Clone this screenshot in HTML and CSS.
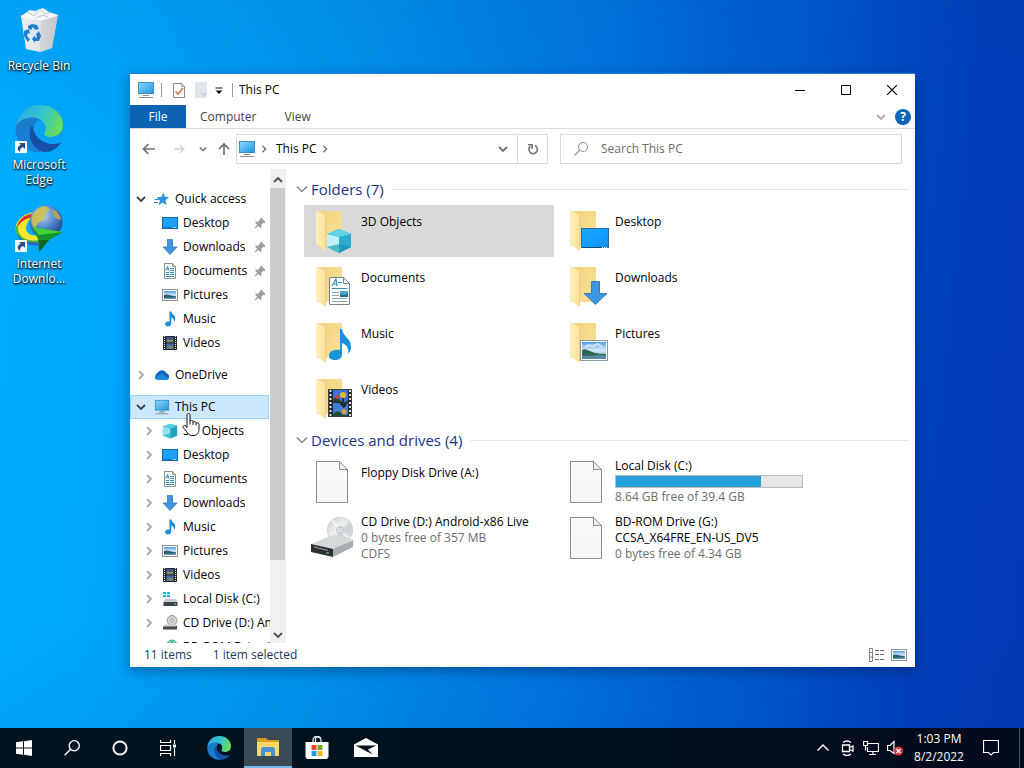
FILE: index.html
```html
<!DOCTYPE html>
<html lang="en">
<head>
<meta charset="utf-8">
<meta name="viewport" content="width=device-width, initial-scale=1">
<title>This PC</title>
<link rel="stylesheet" href="styles.css">
</head>
<body>
<svg class="sprite" aria-hidden="true">
  <defs>
    <linearGradient id="g-screen" x1="0" y1="0" x2="1" y2="1"><stop offset="0" stop-color="#8ad8f8"/><stop offset="1" stop-color="#2196e3"/></linearGradient>
    <linearGradient id="g-back" x1="0" y1="0" x2="1" y2="1"><stop offset="0" stop-color="#f0d07c"/><stop offset="1" stop-color="#fce39c"/></linearGradient>
    <linearGradient id="g-flap" x1="0" y1="0" x2="1" y2="0"><stop offset="0" stop-color="#fef0bd"/><stop offset="1" stop-color="#fde198"/></linearGradient>
    <linearGradient id="g-desk" x1="0" y1="0" x2="1" y2="1"><stop offset="0" stop-color="#22a4fb"/><stop offset=".5" stop-color="#12a0ff"/><stop offset="1" stop-color="#1b8cf0"/></linearGradient>
    <linearGradient id="g-sky" x1="0" y1="0" x2="0" y2="1"><stop offset="0" stop-color="#4f9fe8"/><stop offset=".5" stop-color="#d5ebfa"/><stop offset="1" stop-color="#5d93b0"/></linearGradient>
    <linearGradient id="g-bin" x1="0" y1="0" x2="1" y2="0"><stop offset="0" stop-color="#eceff1"/><stop offset=".6" stop-color="#dfe2e4"/><stop offset="1" stop-color="#b9bdc0"/></linearGradient>
    <linearGradient id="g-edge-top" x1="0" y1=".3" x2="1" y2=".6"><stop offset="0" stop-color="#2aa9df"/><stop offset=".5" stop-color="#33c5d0"/><stop offset="1" stop-color="#6be04f"/></linearGradient>
    <linearGradient id="g-edge-left" x1="0" y1="0" x2=".5" y2="1"><stop offset="0" stop-color="#1b77c0"/><stop offset="1" stop-color="#1683df"/></linearGradient>
    <linearGradient id="g-cd" x1="0" y1="0" x2="1" y2="1"><stop offset="0" stop-color="#c6cbcd"/><stop offset=".45" stop-color="#eef1f2"/><stop offset=".6" stop-color="#ccd2d4"/><stop offset="1" stop-color="#dde1e2"/></linearGradient>
    <radialGradient id="g-globe" cx=".4" cy=".3" r=".8"><stop offset="0" stop-color="#b8d7f2"/><stop offset=".5" stop-color="#4c82cb"/><stop offset="1" stop-color="#173a7c"/></radialGradient>
    <linearGradient id="g-page" x1="0" y1="0" x2="0" y2="1"><stop offset="0" stop-color="#f9fafa"/><stop offset="1" stop-color="#f5f7f7"/></linearGradient>
  </defs>

  <symbol id="i-pc" viewBox="0 0 18 18">
    <rect x="1.5" y="1.5" width="15" height="11" fill="url(#g-screen)" stroke="#3d8fc6"/>
    <path d="M6 14.5h6M2 16.5h14" stroke="#8a9299" stroke-width="1.2"/>
  </symbol>
  <symbol id="i-desktop" viewBox="0 0 16 16">
    <rect x=".5" y="2.5" width="15" height="11" fill="#1ba1f8" stroke="#1469ad"/>
    <path d="M1 12.5h10" stroke="#1778c4"/><path d="M11 12.5h4" stroke="#d8efff" stroke-dasharray="1 1"/>
  </symbol>
  <symbol id="i-downloads" viewBox="0 0 16 16">
    <path d="M5.500 .5h5v7.500h4.500L8 15.500 1 8h4.500z" fill="#3f96de" stroke="#2f78b8" stroke-width=".8"/>
  </symbol>
  <symbol id="i-documents" viewBox="0 0 16 16">
    <path d="M2.500.5h8l3 3v12h-11z" fill="#fff" stroke="#8a8f94"/><path d="M10.500.5v3h3" fill="none" stroke="#8a8f94"/>
    <path d="M4 7.500 5.500 3.500 7 7.500M4.500 6h2M8 5.500h4M8 7.500h4M4 9.500h3M8 9.500h4M4 11.500h3M8 11.500h4M4 13.500h8" stroke="#3388bb" fill="none"/>
  </symbol>
  <symbol id="i-pictures" viewBox="0 0 16 16">
    <rect x=".5" y="2.5" width="15" height="11" fill="#fff" stroke="#8b9299"/>
    <rect x="2" y="4" width="12" height="8" fill="url(#g-sky)"/><path d="M2 8c3-1.500 5 0 12 1.500V12H2z" fill="#2c6173"/><path d="M2 11l12-.5V12H2z" fill="#6f9fc0"/>
  </symbol>
  <symbol id="i-music" viewBox="0 0 16 16">
    <path d="M7.500.5h1.800c.3 3 4 3.500 4 7 0 1.500-.6 2.600-1.300 3.500.3-2.500-.8-3.700-2.700-4.500v6c0 1.800-1.600 3-3.400 3-1.600 0-2.900-.9-2.900-2.400 0-1.900 2.300-3.100 4.500-2.500z" fill="#1b90dc"/>
  </symbol>
  <symbol id="i-videos" viewBox="0 0 16 16">
    <rect x="1" y="1" width="14" height="14" fill="#2a2c2e"/>
    <path d="M2.500 1v14M13.500 1v14" stroke="#e6e6e6" stroke-dasharray="1 1"/>
    <rect x="4.5" y="2" width="7" height="5.5" fill="#3b56a0"/><rect x="4.5" y="8.5" width="7" height="5.5" fill="#4668b8"/>
    <path d="M5 5c2-2 3 2 6-1v3H5zM5 12c2-2 3 1 6-2v3H5z" fill="#8b923c"/>
  </symbol>
  <symbol id="i-star" viewBox="0 0 16 16">
    <path d="M9.500 1.500 10.800 5.800l4.200.4-3.500 3 1.200 5-4-2.800-4.200 2.800 1.500-4.700L2.500 6.300l4.800-.3z" fill="#2a92df"/><path d="M1 8.500h4M0 11.500h4" stroke="#2a92df"/>
  </symbol>
  <symbol id="i-onedrive" viewBox="0 0 18 16">
    <path d="M4.500 13.500A4.300 4.300 0 0 1 4 5.500 5.600 5.600 0 0 1 14 6a3.900 3.900 0 0 1 .5 7.500z" fill="#0f65b8"/><path d="M4 13.500c-1.500 0-3-1-3.300-3L9 6.500l7.500 4.800c-.5 1.600-1.700 2.200-3.200 2.200z" fill="#1b8ade"/>
  </symbol>
  <symbol id="i-cube" viewBox="0 0 18 18">
    <path d="M1 4 9 .8 17 3v11l-7.500 3.500L1 14z" fill="#38bcd4"/><path d="M1 4l8.500 2.200V17.500L1 14z" fill="#8fe3ee"/><path d="M9.500 6.200 17 3v11l-7.500 3.500z" fill="#21a3c0"/><path d="M1 4 9 .8 17 3 9.500 6.200z" fill="#57cfe0"/><path d="M1 14l8.500-2.500v6z" fill="#43bfd2"/>
  </symbol>
  <symbol id="i-disk" viewBox="0 0 16 16">
    <path d="M1 1h3v2H1zM5 1h3v2H5zM1 4h3v2H1zM5 4h3v2H5z" fill="#19b3e6"/><path d="M3 8h11l1.500 3H1.500z" fill="#c8cccf"/><path d="M1.500 11h14v4h-14z" fill="#3b4247"/><path d="M12 13h2" stroke="#62e076"/>
  </symbol>
  <symbol id="i-cd" viewBox="0 0 16 16">
    <circle cx="10" cy="5.5" r="5" fill="#d2d6d8" stroke="#93999c"/><circle cx="10" cy="5.5" r="1.500" fill="#fff" stroke="#93999c"/><path d="M2.500 9.500h9l4 1.500-2 1H1z" fill="#cdd1d3"/><path d="M1 11.500h12l2-1v4H1z" fill="#454b4f"/>
  </symbol>
  <symbol id="i-bd" viewBox="0 0 16 16">
    <circle cx="10" cy="6" r="5" fill="#7fd9a8" stroke="#4ab988"/><path d="M7 8l4-7" stroke="#2b9d68"/>
  </symbol>
  <symbol id="i-pin" viewBox="0 0 12 12">
    <path d="M7 .5 11.500 5l-1 1-1-.3-2.300 2.300.2 2-1 1L4.300 8.900 1 11.500.5 11l2.600-3.300L1 5.600l1-1 2 .2L6.300 2.500 6 1.500z" fill="#9a9ea2"/>
  </symbol>
  <symbol id="i-down" viewBox="0 0 10 10"><path d="M1 3l4 4 4-4" fill="none" stroke="currentColor" stroke-width="1.800"/></symbol>
  <symbol id="i-down-thin" viewBox="0 0 12 10"><path d="M1 2.500l5 5 5-5" fill="none" stroke="currentColor" stroke-width="1.100"/></symbol>
  <symbol id="i-up" viewBox="0 0 10 10"><path d="M1 7l4-4 4 4" fill="none" stroke="currentColor" stroke-width="1.800"/></symbol>
  <symbol id="i-right" viewBox="0 0 10 10"><path d="M3 1l4 4-4 4" fill="none" stroke="currentColor" stroke-width="1.700"/></symbol>
  <symbol id="i-search" viewBox="0 0 16 16"><circle cx="10" cy="6" r="4.500" fill="none" stroke="currentColor" stroke-width="1.200"/><path d="M6.800 9.200 1.500 14.500" stroke="currentColor" stroke-width="1.300"/></symbol>

  <symbol id="folder" viewBox="0 0 48 48">
    <path d="M9 6h25v35H9z" fill="url(#g-back)"/>
    <path d="M9 6h1l8 5v33c0 2-1 2-2 1l-8-7V7c0-1 0-1 1-1z" fill="url(#g-flap)"/>
    <path d="M17.500 12v32" stroke="#f0d080" fill="none"/>
  </symbol>
  <symbol id="f-cube" viewBox="0 0 48 48">
    <use href="#folder"/><path d="M19 29 31 24l12 5v13l-12 6-12-6z" fill="#1fa8cb"/><path d="M19 29l12 3v16l-12-6z" fill="#bff0f7"/><path d="M31 32l12-3v13l-12 6z" fill="#2dacd0"/><path d="M19 29 31 24l12 5-12 3z" fill="#5fd4e8"/><path d="M19 42l12-3 12 3-12 6z" fill="#0d8fa9" opacity=".6"/>
  </symbol>
  <symbol id="f-desktop" viewBox="0 0 48 48">
    <use href="#folder"/><rect x="19.5" y="23.5" width="27" height="19" fill="url(#g-desk)" stroke="#1d6da9"/><path d="M20 42.500h20" stroke="#154f80"/><path d="M40 42.500h6" stroke="#e9f6ff" stroke-dasharray="1 1"/>
  </symbol>
  <symbol id="f-documents" viewBox="0 0 48 48">
    <use href="#folder"/><path d="M21.500 16.500h14l6 6v21h-20z" fill="#fdfeff" stroke="#77838b"/><path d="M35.500 16.500v6h6z" fill="#eef1f3" stroke="#77838b"/>
    <path d="M24 25l4-7 1 7M25 23h4M30 21.500h4M23.500 27.500h16" fill="none" stroke="#3a8fbb" stroke-width="1.200"/><path d="M24 31.500h7M24 34.500h7M24 37.500h15M24 40.500h15" stroke="#8ea4b1"/><path d="M32 30h8v6h-8z" fill="#4ba3d4"/><path d="M32 33l3 1 5-1v3h-8z" fill="#2c6b80"/>
  </symbol>
  <symbol id="f-downloads" viewBox="0 0 48 48">
    <use href="#folder"/><path d="M29.500 20.500h8v12H45L33.500 43.500 22 32.500h7.500z" fill="#3b97e4" stroke="#397bad"/>
  </symbol>
  <symbol id="f-music" viewBox="0 0 48 48">
    <use href="#folder"/><path d="M32 12h2c1 8 9 9 9 18 0 3-1.500 5-3 7 1-6-1-9-6-11v11c0 4-3 6-7 6-3.500 0-6-1.500-6-4.500 0-4 5-6.500 11-5.500z" fill="#1793dc"/>
  </symbol>
  <symbol id="f-pictures" viewBox="0 0 48 48">
    <use href="#folder"/><rect x="18.5" y="23.5" width="27" height="20" fill="#fff" stroke="#8599a5"/><rect x="20" y="25" width="24" height="17" fill="url(#g-sky)"/><path d="M23 30l4-2 4 1 5-2 4 3" stroke="#fff" stroke-width="2" opacity=".6" fill="none"/><path d="M20 33c3-2 5 0 8 1s5 3 16 3v1c-8 1-16 1-24 1z" fill="#2b6650"/><path d="M20 39c7 0 16-1 24-1v4H20z" fill="#5689a3"/>
  </symbol>
  <symbol id="f-videos" viewBox="0 0 48 48">
    <use href="#folder"/><rect x="20.5" y="16.5" width="23" height="27" fill="#25282b" stroke="#3b3f42"/><path d="M22.500 17v27M42 17v27" stroke="#eee" stroke-width="1.800" stroke-dasharray="2 2"/>
    <rect x="25" y="17" width="15" height="12" fill="#3b73d4"/><rect x="25" y="30" width="15" height="13" fill="#4180da"/>
    <path d="M25 26q4-4 7 1t8 0v2H25zM25 41q5-5 8-1t7 1v2H25z" fill="#27472f"/><circle cx="35" cy="22" r="3" fill="#e8b92c"/><circle cx="29" cy="24" r="2" fill="#c84a35"/><circle cx="36" cy="38.5" r="2.500" fill="#e29e27"/><path d="M35 25v4M33 31h5l-2 3z" stroke="#201d18" stroke-width="1.500" fill="#d7432b"/>
  </symbol>
  <symbol id="f-page" viewBox="0 0 48 48">
    <path d="M8.500 5.500h23l8 8v33h-31z" fill="url(#g-page)" stroke="#8b8e90"/><path d="M31.500 5.500v8h8z" fill="#eceeee" stroke="#8b8e90"/>
  </symbol>
  <symbol id="f-cd" viewBox="0 0 48 48">
    <circle cx="32" cy="18" r="12.700" fill="url(#g-cd)" stroke="#bfc5c8" stroke-width=".7"/><path d="M32 18 24 8M32 18l10 9" stroke="#f8fafa" stroke-width="3" opacity=".6"/><circle cx="32" cy="18" r="3.300" fill="#eef1f2" stroke="#aeb4b7"/><circle cx="32" cy="18" r="1.200" fill="#fff" stroke="#9ba1a4" stroke-width=".6"/>
    <path d="M3 32 25 23l20 4-20 11z" fill="#d5d9da"/><path d="M3 32l22 5v8L3 40z" fill="#2d3133"/><path d="M25 37l20-9v7L25 45z" fill="#a9aeb0"/><path d="M6 35l14 3.500" stroke="#a0a6a9"/><path d="M18 41h3" stroke="#6ee07e"/>
  </symbol>

  <symbol id="i-edge" viewBox="0 0 48 48">
    <circle cx="24" cy="24" r="23.500" fill="url(#g-edge-left)"/>
    <path d="M1 21C3 8 13 0 25 0c13 0 23 9 23 20 0 8-6 12-12 12-5 0-8-2-7-4 2-2 2-8-1-11C22 10 7 11 1 21z" fill="url(#g-edge-top)"/>
    <path d="M17 20c-6 11 0 24 12 27 8 1 14-5 17-9 1-1 0-2-1-1-10 4-25 0-28-17z" fill="#174fa7"/>
    <path class="edge-gap" d="M29 28c-1 2 2 4 7 4s12-3 12-9v13c-1 2-6 3-10 3-10 0-20-8-19-17 1-6 6-8 9-5 3 3 3 9 1 11z"/>
  </symbol>
  <symbol id="i-shortcut" viewBox="0 0 12 12"><path d="M0 0h12v12H0z" fill="#f6f8fa"/><path d="M4 2h6v6L8 6c-3 1-3 3-3 5C1 8 3 4.500 6 4z" fill="#274b85"/></symbol>
  <symbol id="i-recycle" viewBox="0 0 48 48">
    <path d="M6 10 15 4l5 1 8-3 6 4 9 3-3 7H8z" fill="#f4f6f7"/><path d="M12 6l7 4 5-7 6 5 6-2M9 10l8 4 11-5 9 4" fill="none" stroke="#c2c8cd"/>
    <path d="M6 10l20 4 17-5-6 33-12 4-14-3z" fill="url(#g-bin)"/><path d="M26 14 43 9l-6 33-12 4z" fill="#c9cdd0" opacity=".65"/><path d="M6 10l20 4 17-5" fill="none" stroke="#fff"/>
    <g fill="#1d7dd0"><path d="M13 20l4-2 5 1 2 4-4 1-2-3-2 3-3-2z"/><path d="M9 25l5-2 1 5-2-1-1 3 3 3-2 3-4-6z"/><path d="M24 25l2 5-2 5h-4v2l-3-4 3-4v3l2-1-1-3z"/></g>
  </symbol>
  <symbol id="i-idm" viewBox="0 0 48 48">
    <path d="M22 8C8 8-1 18 1 27c2 9 16 12 26 10l-2-6C13 33 9 27 12 20c2-5 7-8 12-9z" fill="#f5e731"/>
    <path d="M20 9C8 10 2 18 2 24c3-6 8-10 20-12z" fill="#dc2f28"/><path d="M3 22c-1 13 12 16 23 14l1 3C12 41-1 35 1 22z" fill="#44b63c"/><path d="M2 30c5 9 17 9 26 8l-1 3C14 43 4 38 2 30z" fill="#345bc6"/>
    <circle cx="31" cy="18" r="16.500" fill="url(#g-globe)"/><path d="M17 12c3-7 9-10 14-10l4 4-4 3-2 7-6 3-3 6c-4-4-4-9-3-13z" fill="#cfc052" opacity=".9"/><path d="M37 5c5 2 8 6 9 11l-6-2-2-4z" fill="#a9a757"/>
    <path d="M17 23l31 5-14 8-10 12-1-13z" fill="#16942a"/><path d="M17 23l31 5-24 3z" fill="#42cf3d"/><path d="M24 36l10 0-10 12z" fill="#0b6820"/>
  </symbol>
</svg>

<div class="screen">
  <main class="desktop">
    <nav class="shortcuts" aria-label="Desktop">
      <a class="shortcut" href="#"><span class="shortcut-art"><svg class="i48"><use href="#i-recycle"/></svg></span><span>Recycle Bin</span></a>
      <a class="shortcut" href="#"><span class="shortcut-art"><svg class="i48 edge-desk"><use href="#i-edge"/></svg><svg class="badge"><use href="#i-shortcut"/></svg></span><span>Microsoft<br>Edge</span></a>
      <a class="shortcut" href="#"><span class="shortcut-art"><svg class="i48"><use href="#i-idm"/></svg><svg class="badge"><use href="#i-shortcut"/></svg></span><span>Internet<br>Downlo...</span></a>
    </nav>

    <section class="window" aria-label="This PC">
      <header class="titlebar">
        <svg class="i18"><use href="#i-pc"/></svg>
        <span class="tick"></span>
        <button class="quick" aria-label="Properties"><svg class="i16" viewBox="0 0 16 16"><path d="M2.500 1.500h8l3 3v11h-11z" fill="#fdfdfd" stroke="#8b8b8b"/><path d="M10.500 1.500v3h3" fill="none" stroke="#aaa"/><path d="M4.500 9.500 7 12l5-6" fill="none" stroke="#c67b4c" stroke-width="1.600"/></svg></button>
        <button class="quick" aria-label="New folder"><svg class="i16" viewBox="0 0 16 16"><path d="M2 0h12v11l-1 5H2z" fill="#dfe5ea"/><path d="M10 16v-5h4z" fill="#c8d0d6"/></svg></button>
        <button class="quick narrow" aria-label="Customize Quick Access Toolbar"><svg class="i10" viewBox="0 0 10 10"><path d="M1.500 3h7" stroke="#111"/><path d="M1.500 5.500h7L5 9z" fill="#111"/></svg></button>
        <span class="tick"></span>
        <h1 class="title">This PC</h1>
        <div class="controls">
          <button aria-label="Minimize"><svg class="i10" viewBox="0 0 10 10"><path d="M0 5.500h10" stroke="#000"/></svg></button>
          <button aria-label="Maximize"><svg class="i10" viewBox="0 0 10 10"><path d="M.5.5h9v9h-9z" fill="none" stroke="#000"/></svg></button>
          <button aria-label="Close"><svg class="i10" viewBox="0 0 10 10"><path d="M0 0l10 10M10 0 0 10" stroke="#000" stroke-width="1.100"/></svg></button>
        </div>
      </header>

      <div class="ribbon">
        <button class="tab file">File</button>
        <button class="tab">Computer</button>
        <button class="tab">View</button>
        <button class="expand" aria-label="Expand the Ribbon"><svg class="i10"><use href="#i-down"/></svg></button>
        <button class="help" aria-label="Help">?</button>
      </div>

      <div class="navbar">
        <button class="nav" aria-label="Back"><svg class="i14" viewBox="0 0 14 14"><path d="M13 7H1.500M6.500 2l-5 5 5 5" fill="none" stroke="#707070" stroke-width="1.700"/></svg></button>
        <button class="nav" aria-label="Forward"><svg class="i14" viewBox="0 0 14 14"><path d="M2 7h10M8 3l4 4-4 4" fill="none" stroke="#d2d2d2" stroke-width="1.400"/></svg></button>
        <button class="nav recent" aria-label="Recent locations"><svg class="i8"><use href="#i-down"/></svg></button>
        <button class="nav upward" aria-label="Up"><svg class="i14" viewBox="0 0 14 14"><path d="M7 13V2M2 7l5-5 5 5" fill="none" stroke="#707070" stroke-width="1.700"/></svg></button>
        <div class="address">
          <svg class="i18"><use href="#i-pc"/></svg>
          <svg class="i8 crumb"><use href="#i-right"/></svg>
          <a class="here" href="#">This PC</a>
          <svg class="i8 crumb"><use href="#i-right"/></svg>
          <button class="history" aria-label="Previous locations"><svg class="i10"><use href="#i-down"/></svg></button>
          <button class="refresh" aria-label="Refresh"><svg class="i14" viewBox="0 0 14 14"><path d="M9 3.600A4.200 4.200 0 1 1 4.400 4.200" fill="none" stroke="#777" stroke-width="1.700"/><path d="M2 2.800h4.200V7" fill="none" stroke="#777" stroke-width="1.600"/></svg></button>
        </div>
        <div class="search"><svg class="i16"><use href="#i-search"/></svg><input type="search" placeholder="Search This PC" aria-label="Search This PC"></div>
      </div>

      <div class="body">
        <nav class="tree" aria-label="Folders">
          <ul>
            <li class="root open"><button aria-label="Collapse"><svg class="i10"><use href="#i-down"/></svg></button><a href="#"><svg class="i16"><use href="#i-star"/></svg>Quick access</a></li>
            <li class="leaf"><a href="#"><svg class="i16"><use href="#i-desktop"/></svg>Desktop</a><svg class="pin"><use href="#i-pin"/></svg></li>
            <li class="leaf"><a href="#"><svg class="i16"><use href="#i-downloads"/></svg>Downloads</a><svg class="pin"><use href="#i-pin"/></svg></li>
            <li class="leaf"><a href="#"><svg class="i16"><use href="#i-documents"/></svg>Documents</a><svg class="pin"><use href="#i-pin"/></svg></li>
            <li class="leaf"><a href="#"><svg class="i16"><use href="#i-pictures"/></svg>Pictures</a><svg class="pin"><use href="#i-pin"/></svg></li>
            <li class="leaf"><a href="#"><svg class="i16"><use href="#i-music"/></svg>Music</a></li>
            <li class="leaf"><a href="#"><svg class="i16"><use href="#i-videos"/></svg>Videos</a></li>
          </ul>
          <ul>
            <li class="root"><button aria-label="Expand"><svg class="i10"><use href="#i-right"/></svg></button><a href="#"><svg class="i16"><use href="#i-onedrive"/></svg>OneDrive</a></li>
          </ul>
          <ul>
            <li class="root open selected"><button aria-label="Collapse"><svg class="i10"><use href="#i-down"/></svg></button><a href="#"><svg class="i16"><use href="#i-pc"/></svg>This PC</a></li>
            <li><button aria-label="Expand"><svg class="i10"><use href="#i-right"/></svg></button><a href="#"><svg class="i16"><use href="#i-cube"/></svg>3D Objects</a></li>
            <li><button aria-label="Expand"><svg class="i10"><use href="#i-right"/></svg></button><a href="#"><svg class="i16"><use href="#i-desktop"/></svg>Desktop</a></li>
            <li><button aria-label="Expand"><svg class="i10"><use href="#i-right"/></svg></button><a href="#"><svg class="i16"><use href="#i-documents"/></svg>Documents</a></li>
            <li><button aria-label="Expand"><svg class="i10"><use href="#i-right"/></svg></button><a href="#"><svg class="i16"><use href="#i-downloads"/></svg>Downloads</a></li>
            <li><button aria-label="Expand"><svg class="i10"><use href="#i-right"/></svg></button><a href="#"><svg class="i16"><use href="#i-music"/></svg>Music</a></li>
            <li><button aria-label="Expand"><svg class="i10"><use href="#i-right"/></svg></button><a href="#"><svg class="i16"><use href="#i-pictures"/></svg>Pictures</a></li>
            <li><button aria-label="Expand"><svg class="i10"><use href="#i-right"/></svg></button><a href="#"><svg class="i16"><use href="#i-videos"/></svg>Videos</a></li>
            <li><button aria-label="Expand"><svg class="i10"><use href="#i-right"/></svg></button><a href="#"><svg class="i16"><use href="#i-disk"/></svg>Local Disk (C:)</a></li>
            <li><button aria-label="Expand"><svg class="i10"><use href="#i-right"/></svg></button><a href="#"><svg class="i16"><use href="#i-cd"/></svg>CD Drive (D:) An</a></li>
            <li><button aria-label="Expand"><svg class="i10"><use href="#i-right"/></svg></button><a href="#"><svg class="i16"><use href="#i-bd"/></svg>BD-ROM Drive (</a></li>
          </ul>
        </nav>
        <div class="scrollbar">
          <button aria-label="Scroll up"><svg class="i10"><use href="#i-up"/></svg></button>
          <div class="track"><div class="thumb"></div></div>
          <button aria-label="Scroll down"><svg class="i10"><use href="#i-down"/></svg></button>
        </div>

        <div class="content">
          <section class="group">
            <h2><svg class="chev"><use href="#i-down-thin"/></svg>Folders (7)</h2>
            <div class="tiles">
              <a class="tile active" href="#"><svg class="i48"><use href="#f-cube"/></svg><span class="text">3D Objects</span></a>
              <a class="tile" href="#"><svg class="i48"><use href="#f-desktop"/></svg><span class="text">Desktop</span></a>
              <a class="tile" href="#"><svg class="i48"><use href="#f-documents"/></svg><span class="text">Documents</span></a>
              <a class="tile" href="#"><svg class="i48"><use href="#f-downloads"/></svg><span class="text">Downloads</span></a>
              <a class="tile" href="#"><svg class="i48"><use href="#f-music"/></svg><span class="text">Music</span></a>
              <a class="tile" href="#"><svg class="i48"><use href="#f-pictures"/></svg><span class="text">Pictures</span></a>
              <a class="tile" href="#"><svg class="i48"><use href="#f-videos"/></svg><span class="text">Videos</span></a>
            </div>
          </section>
          <section class="group">
            <h2><svg class="chev"><use href="#i-down-thin"/></svg>Devices and drives (4)</h2>
            <div class="tiles">
              <a class="tile" href="#"><svg class="i48"><use href="#f-page"/></svg><span class="text">Floppy Disk Drive (A:)</span></a>
              <a class="tile" href="#"><svg class="i48"><use href="#f-page"/></svg><span class="text full"><span>Local Disk (C:)</span><progress value="78" max="100" aria-label="Used space"></progress><small>8.64 GB free of 39.4 GB</small></span></a>
              <a class="tile" href="#"><svg class="i48"><use href="#f-cd"/></svg><span class="text full"><span>CD Drive (D:) Android-x86 Live</span><small>0 bytes free of 357 MB</small><small>CDFS</small></span></a>
              <a class="tile" href="#"><svg class="i48"><use href="#f-page"/></svg><span class="text full"><span>BD-ROM Drive (G:)</span><span>CCSA_X64FRE_EN-US_DV5</span><small>0 bytes free of 4.34 GB</small></span></a>
            </div>
          </section>
        </div>
      </div>

      <footer class="status">
        <span>11 items</span><span>1 item selected</span>
        <button class="view-first" aria-label="Details view"><svg class="i16" viewBox="0 0 16 16"><path d="M.5 1.500h3v13h-3zM.5 5.500h3M.5 10h3" fill="none" stroke="#858585"/><path d="M6 3.500h10M6 7.500h10M6 12.500h10" stroke="#666" stroke-dasharray="4 1"/></svg></button>
        <button aria-label="Large icons view"><svg class="i16"><use href="#i-pictures"/></svg></button>
      </footer>
    </section>

    <svg class="pointer" viewBox="0 0 18 24" aria-hidden="true"><path d="M5 2.500c0-2 3-2 3 0V9c0-1.500 3-1.500 3 0v1c0-1.500 3-1 3 .5v.500c.5-1 3-1 3 1V17c0 3-2 6-5 6H9.500C6.500 23 5 19 1.500 15.500 0 13.500 2.500 12 4 13.500L5 15z" fill="#fff" stroke="#111"/><path d="M8 9v3M11 10v2.500M14 11v2" stroke="#111"/></svg>
  </main>

  <footer class="taskbar">
    <button aria-label="Start"><svg class="i16" viewBox="0 0 16 16"><path d="M0 2.300 7 1.300V7.500H0zM8 1.200 16 0v7.500H8zM0 8.500h7v6.200l-7-1zM8 8.500h8V16l-8-1.200z" fill="#fff"/></svg></button>
    <button aria-label="Search"><svg class="i18"><use href="#i-search"/></svg></button>
    <button aria-label="Cortana"><svg class="i16" viewBox="0 0 16 16"><circle cx="8" cy="8" r="6.600" fill="none" stroke="#f4f7f8" stroke-width="2"/></svg></button>
    <button aria-label="Task view"><svg class="i16" viewBox="0 0 16 16"><path d="M.5 0v2.500h10V0M.5 5.500h10v5H.5zM.5 16v-2.500h10V16M14.500 0v4M14.500 8v8" fill="none" stroke="#fff" stroke-width="1.200"/><path d="M13 4.500h3v3h-3z" fill="#fff"/></svg></button>
    <div class="apps">
      <button aria-label="Microsoft Edge"><svg class="i24 edge-bar"><use href="#i-edge"/></svg></button>
      <button class="running" aria-label="File Explorer"><svg class="i24" viewBox="0 0 24 24"><path d="M1 3h9l2 2h11v16H1z" fill="#d99c22"/><path d="M1 7h22v14H1z" fill="#ffd968"/><path d="M5 21v-7l1.500-2h11l1.500 2v7h-4v-4H9v4z" fill="#4b91d1"/></svg></button>
      <button aria-label="Microsoft Store"><svg class="i24" viewBox="0 0 24 24"><path d="M8 7V4c0-5 8-5 8 0v3M10.500 6V3c0-3 5-2 5 0" fill="none" stroke="#dfe6ea" stroke-width="1.300"/><path d="M.5 6h23v15l-1.500 2H2L.500 21z" fill="#fff"/><path d="M6.500 9h5v5h-5z" fill="#e4492d"/><path d="M12.500 9h5v5h-5z" fill="#6fad21"/><path d="M6.500 15h5v5h-5z" fill="#2797db"/><path d="M12.500 15h5v5h-5z" fill="#f3b61b"/></svg></button>
      <button aria-label="Mail"><svg class="i24" viewBox="0 0 24 24"><path d="M0 8.500 12 2l12 6.500V21H0z" fill="#fff"/><path d="M1.500 9.500h21L14 13.500l4.500 5z" fill="#07131e"/></svg></button>
    </div>
    <div class="tray">
      <button aria-label="Show hidden icons"><svg class="i14" viewBox="0 0 14 14"><path d="M1.500 9.500 7 4l5.500 5.500" fill="none" stroke="#fff" stroke-width="1.400"/></svg></button>
      <button aria-label="Meet Now"><svg class="i16" viewBox="0 0 16 16"><path d="M3.500 5h7v6.500h-7zM10.500 7.500 14 6v5l-3.500-1.500M4 2.500Q8-.5 12 2.500M4 14q4 3 8 0" fill="none" stroke="#fff" stroke-width="1.300"/></svg></button>
      <button aria-label="Network"><svg class="i16" viewBox="0 0 16 16"><path d="M5 3.500h10.500v8H4.500V7M10 11.500v3M6 14.500h7M.5 1.500h4v4h-4zM2.500 5.500v5" fill="none" stroke="#fff" stroke-width="1.200"/></svg></button>
      <button aria-label="Volume muted"><svg class="i16" viewBox="0 0 16 16"><path d="M.5 5.500H3l4-4v12l-4-3H.5z" fill="none" stroke="#fff" stroke-width="1.200"/><circle cx="11.5" cy="11" r="4.500" fill="#d93a3c"/><path d="M9.500 9l4 4M13.500 9l-4 4" stroke="#fff" stroke-width="1.300"/></svg></button>
      <button class="clock"><time>1:03 PM</time><time>8/2/2022</time></button>
      <button class="notices" aria-label="Notifications"><svg class="i16" viewBox="0 0 16 16"><path d="M.5.500h15v12h-5L8 15l-2.500-2.500h-5z" fill="none" stroke="#fff" stroke-width="1.200"/></svg></button>
      <button class="peek" aria-label="Show desktop"></button>
    </div>
  </footer>
</div>
</body>
</html>
```
FILE: styles.css
```css
* { box-sizing: border-box; }

body {
  margin: 0;
  font: 12px/16px "Open Sans", "Noto Sans", sans-serif;
  color: #000;
}

h1, h2, ul { margin: 0; padding: 0; font-weight: 400; list-style: none; }
a { color: inherit; text-decoration: none; }
button { margin: 0; padding: 0; border: 0; background: none; color: inherit; font: inherit; }
small { font-size: 12px; color: #6d6d6d; }
svg { display: block; flex: none; }

.sprite { position: absolute; width: 0; height: 0; }
.i8 { width: 8px; height: 8px; }
.i10 { width: 10px; height: 10px; }
.i14 { width: 14px; height: 14px; }
.i16 { width: 16px; height: 16px; }
.i18 { width: 18px; height: 18px; }
.i24 { width: 24px; height: 24px; }
.i48 { width: 48px; height: 48px; }

.screen { display: flex; flex-direction: column; height: 100vh; min-height: 480px; overflow: hidden; }

.desktop {
  position: relative;
  flex: 1;
  min-height: 0;
  background:
    linear-gradient(180deg, rgba(0, 60, 150, .1), transparent 25%, transparent 85%, rgba(0, 60, 140, .06)),
    linear-gradient(96deg, #00adff 0%, #00a7fb 13%, #0092ec 35%, #0072dc 58%, #0052c8 78%, #003eb9 90%, #0038b2 100%);
}

/* Desktop shortcuts */
.shortcuts { display: flex; flex-direction: column; width: 78px; }
.shortcut {
  display: flex;
  flex-direction: column;
  align-items: center;
  gap: 4px;
  height: 99px;
  padding-top: 6px;
  line-height: 15px;
  text-align: center;
  color: #fff;
  text-shadow: 0 1px 2px #000, 1px 1px 2px rgba(0, 0, 0, .8);
}
.shortcut-art { position: relative; }
.badge { position: absolute; left: 0; bottom: 0; width: 12px; height: 12px; }
.edge-desk { color: #0aa2f5; }
.edge-bar { color: #06131f; }
.edge-gap { fill: currentColor; }

/* Explorer window */
.window {
  position: absolute;
  inset: 73px 109px 61px 129px;
  display: flex;
  flex-direction: column;
  border: 1px solid #1883d7;
  border-right-width: 0;
  border-bottom-width: 0;
  background: #fff;
  box-shadow: 0 4px 12px rgba(0, 20, 70, .4);
}

.titlebar { display: flex; align-items: center; height: 31px; padding-left: 7px; }
.tick { width: 1px; height: 14px; margin: 0 6px; background: #9a9a9a; }
.quick { display: grid; place-items: center; width: 22px; height: 24px; }
.quick.narrow { width: 14px; }
.title { font-size: 12px; }
.controls { display: flex; align-self: stretch; margin-left: auto; }
.controls button { display: grid; place-items: center; width: 46px; }

.ribbon { display: flex; align-items: center; height: 24px; border-bottom: 1px solid #dadbdc; color: #444; }
.tab { align-self: stretch; padding: 0 14px; }
.tab.file { width: 56px; background: #0c63b1; color: #fff; }
.expand { margin-left: auto; color: #b0b0b0; }
.help { width: 16px; height: 16px; margin: 0 4px 0 9px; border-radius: 50%; background: #0b64b4; color: #fff; font-weight: 700; line-height: 16px; }

.navbar { display: flex; align-items: center; height: 40px; padding: 0 13px 0 4px; color: #707070; }
.nav { display: grid; place-items: center; width: 30px; height: 30px; }
.nav.recent { width: 17px; }
.nav.upward { width: 25px; }
.address { display: flex; flex: 312 1 312px; align-items: center; height: 30px; padding-left: 1px; border: 1px solid #d9d9d9; }
.crumb { margin: 0 8px 0 4px; }
.here { color: #000; }
.history { display: grid; place-items: center; width: 28px; height: 28px; margin-left: auto; }
.refresh { display: grid; place-items: center; width: 30px; height: 28px; border-left: 1px solid #d9d9d9; }
.search { display: flex; flex: 342 1 342px; align-items: center; gap: 12px; height: 30px; margin-left: 12px; padding-left: 12px; border: 1px solid #d9d9d9; color: #999; }
.search input { flex: 1; min-width: 0; padding: 0; border: 0; outline: 0; background: none; font: inherit; }
.search input::placeholder { color: #6d6d6d; opacity: 1; }

.body { display: flex; flex: 1; min-height: 0; }

/* Folder tree */
.tree { width: 140px; padding: 18px 1px 0 0; overflow: hidden; }
.tree ul + ul { margin-top: 8px; }
.tree li { display: flex; align-items: center; height: 24px; padding-left: 14px; border: 1px solid transparent; border-left: 0; white-space: nowrap; }
.tree li.root { padding-left: 6px; }
.tree li.leaf { padding-left: 32px; }
.tree li.selected { background: #cce8ff; border: 1px solid #99d1ff; padding-left: 5px; }
.tree button { width: 10px; margin-right: 8px; color: #a0a0a0; }
.tree .open button { color: #404040; }
.tree a { display: flex; align-items: center; gap: 5px; }
.pin { width: 12px; height: 12px; margin-left: auto; margin-right: 2px; }

.scrollbar { display: flex; flex-direction: column; width: 16px; padding-top: 2px; background: #f0f0f0; color: #505050; }
.scrollbar button { display: grid; place-items: center; height: 17px; }
.track { flex: 1; }
.thumb { width: 15px; height: 85%; background: #cdcdcd; }

/* File list */
.content { flex: 1; min-width: 0; padding: 8px 6px 0 10px; overflow: hidden; }
.group + .group { margin-top: 3px; }
.group h2 { display: flex; align-items: center; height: 24px; font-size: 15px; line-height: 24px; color: #1e3287; }
.group h2::after { content: ""; flex: 1; height: 1px; margin-left: 8px; background: #e5e5e5; }
.chev { width: 12px; height: 10px; margin-right: 3px; color: #6c7280; }
.tiles { display: grid; grid-template-columns: repeat(auto-fill, 250px); gap: 4px; padding: 4px 0 0 8px; }
.tile { display: flex; gap: 5px; height: 52px; padding-left: 4px; }
.tile.active { background: #d9d9d9; }
.text { display: flex; flex-direction: column; width: 188px; padding-top: 9px; white-space: nowrap; }
.text.full { padding-top: 2px; }
progress { appearance: none; display: block; width: 188px; height: 13px; margin: 1px 0; border: 1px solid #bcbcbc; background: #e6e6e6; }
progress::-webkit-progress-bar { background: #e6e6e6; }
progress::-webkit-progress-value { background: #26a0da; }

.status { display: flex; align-items: center; height: 24px; padding: 0 8px 0 14px; color: #1e395b; }
.status span { margin-right: 21px; }
.status button { margin-left: 6px; }
.status .view-first { margin-left: auto; }

.pointer { position: absolute; left: 182px; top: 412px; width: 18px; height: 25px; }

/* Taskbar */
.taskbar { display: flex; flex: none; height: 40px; background: linear-gradient(90deg, #02151f, #02101f 55%, #020a1d); color: #fff; }
.taskbar button { display: grid; place-items: center; width: 48px; height: 40px; }
.apps { display: flex; gap: 1px; margin-left: 3px; }
.taskbar .running { border-bottom: 2px solid #76b9ed; background: #3a4a54; }
.tray { display: flex; margin-left: auto; }
.tray button { width: 24px; }
.tray .clock { width: 64px; align-content: center; line-height: 18px; }
.tray .notices { width: 40px; }
.tray .peek { width: 5px; margin-left: 8px; border-left: 1px solid #4b5562; }
```
